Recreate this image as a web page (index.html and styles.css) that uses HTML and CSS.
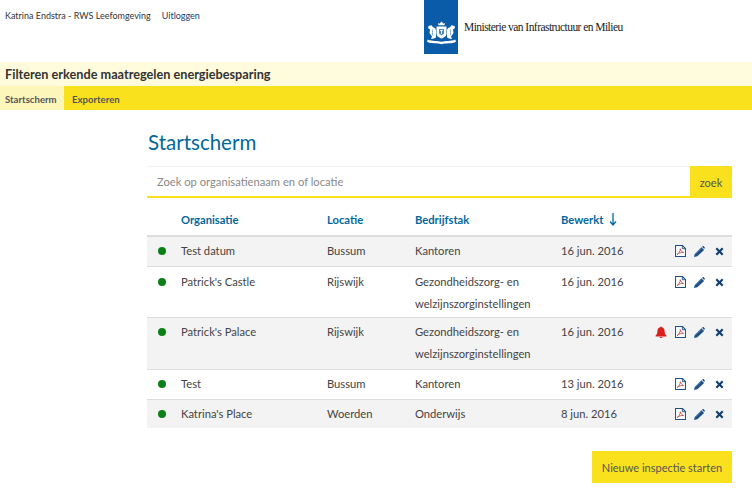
FILE: index.html
```html
<!DOCTYPE html>
<html lang="nl">
<head>
<meta charset="utf-8">
<title>Startscherm</title>
<link rel="stylesheet" href="styles.css">
</head>
<body>
<svg class="defs" width="0" height="0">
  <defs>
    <symbol id="pdf" viewBox="0 0 12 13"><path d="M.6.6h7.600l3.200 3.200v8.600H.6z" fill="#fff" stroke="#1b4f86" stroke-width="1.100"/><path d="M8 .8v3.200h3.200" fill="none" stroke="#1b4f86"/><path d="M2.200 10.400c2-1.200 3.600-3.800 3.600-6.400.6 2.400 1.600 3.400 3.600 4-2.600 0-5 .6-7.200 2.400z" fill="none" stroke="#b5493f" stroke-width=".9"/></symbol>
    <symbol id="pencil" viewBox="0 0 12 12"><path d="M0 12l.8-3.400L8 1.400l3 3-7.400 6.800z" fill="#1b4f86"/><path d="M8.800.8l.6-.5c.4-.3.9-.3 1.200 0l1 1c.3.4.3.9 0 1.200l-.6.700z" fill="#1b4f86"/><path d="M1.400 8.800l6.400-6.200" stroke="#7fa3c7" stroke-width=".8"/></symbol>
    <symbol id="cross" viewBox="0 0 10 10"><path d="M2.300.6L5 3.300 7.700.6l1.700 1.700L6.700 5l2.700 2.700-1.700 1.700L5 6.700 2.300 9.400.6 7.700 3.300 5 .6 2.300z" fill="#123f73"/></symbol>
    <symbol id="bell" viewBox="0 0 12 12"><path d="M6 .4c.5 0 .8.3.8.8 2 .4 2.800 2 2.800 4 0 2 .6 3.200 1.800 4.400v.8H.6v-.8C1.800 8.400 2.400 7.200 2.400 5.200c0-2 .8-3.600 2.800-4 0-.5.3-.8.8-.8z" fill="#d9201c"/><path d="M4.600 11h2.800c0 .6-.6 1-1.400 1s-1.400-.4-1.400-1z" fill="#d9201c"/></symbol>
  </defs>
</svg>
<header class="top">
  <div class="user"><span>Katrina Endstra - RWS Leefomgeving</span><a class="logout" href="#">Uitloggen</a></div>
  <div class="brand">
    <div class="logo">
      <svg class="crest" viewBox="0.500 0 28 24" width="29" height="24">
        <g fill="#fff">
          <path d="M11.500 4.200l-.5-2.200 1.500.8L14.500.5l2 2.300 1.500-.8-.5 2.200z"/>
          <path d="M9.500 5.500h10v7.500c0 2.400-2.700 3.600-5 4.600-2.300-1-5-2.200-5-4.600z"/>
          <path d="M1.500 5l3-.7 1.500 2 2 .7L9 9v7.500l-2 1-3 .5 1-2.500-1.500-2-1-1.500.5-3.500-2-1.500z"/>
          <path d="M27.500 5l-3-.7-1.500 2-2 .7-1 2v7.500l2 1 3 .5-1-2.500 1.500-2 1-1.500-.5-3.500 2-1.500z"/>
          <path d="M.8 18.500c4.200 2 9.700 1.200 13.700 2.200 4-1 9.500-.2 13.700-2.200l.8 2.300c-4 2.200-10.300 1.200-14.500 2.400-4.200-1.200-10.500-.2-14.500-2.400z"/>
        </g>
        <path d="M12 8h5v4.500l-2.500 2-2.500-2z" fill="#4d86bd"/>
        <path d="M13 9.500h3M14.500 9v4" stroke="#fff" stroke-width=".8"/>
        <path d="M5.500 8.500v6M23.500 8.500v6" stroke="#6f9fcc" stroke-width=".8"/>
      </svg>
    </div>
    <span class="ministry">Ministerie van Infrastructuur en Milieu</span>
  </div>
</header>
<div class="appbar">Filteren erkende maatregelen energiebesparing</div>
<nav class="tabs"><a class="tab active" href="#">Startscherm</a><a class="tab" href="#">Exporteren</a></nav>
<main class="content">
  <h1 class="title">Startscherm</h1>
  <form class="search">
    <div class="search-field">Zoek op organisatienaam en of locatie</div>
    <button class="search-btn" type="button">zoek</button>
  </form>
  <table class="list">
    <thead>
      <tr>
        <th class="c-dot"></th><th class="c-org">Organisatie</th><th class="c-loc">Locatie</th><th class="c-bed">Bedrijfstak</th>
        <th class="c-date">Bewerkt <svg class="sort" viewBox="0 0 8 13" width="8" height="13"><path d="M4 0v11.500M1 8.500l3 3.500 3-3.500" fill="none" stroke="#01689b" stroke-width="1.300"/></svg></th>
        <th class="c-act"></th>
      </tr>
    </thead>
    <tbody>
      <tr class="alt">
        <td><i class="dot"></i></td><td>Test datum</td><td>Bussum</td><td>Kantoren</td><td>16 jun. 2016</td>
        <td><div class="actions"><svg class="i-pdf"><use href="#pdf"/></svg><svg class="i-pen"><use href="#pencil"/></svg><svg class="i-x"><use href="#cross"/></svg></div></td>
      </tr>
      <tr class="offset">
        <td><i class="dot"></i></td><td>Patrick's Castle</td><td>Rijswijk</td><td>Gezondheidszorg- en welzijnszorginstellingen</td><td>16 jun. 2016</td>
        <td><div class="actions"><svg class="i-pdf"><use href="#pdf"/></svg><svg class="i-pen"><use href="#pencil"/></svg><svg class="i-x"><use href="#cross"/></svg></div></td>
      </tr>
      <tr class="alt">
        <td><i class="dot"></i></td><td>Patrick's Palace</td><td>Rijswijk</td><td>Gezondheidszorg- en welzijnszorginstellingen</td><td>16 jun. 2016</td>
        <td><div class="actions"><svg class="i-bell"><use href="#bell"/></svg><svg class="i-pdf"><use href="#pdf"/></svg><svg class="i-pen"><use href="#pencil"/></svg><svg class="i-x"><use href="#cross"/></svg></div></td>
      </tr>
      <tr>
        <td><i class="dot"></i></td><td>Test</td><td>Bussum</td><td>Kantoren</td><td>13 jun. 2016</td>
        <td><div class="actions"><svg class="i-pdf"><use href="#pdf"/></svg><svg class="i-pen"><use href="#pencil"/></svg><svg class="i-x"><use href="#cross"/></svg></div></td>
      </tr>
      <tr class="alt">
        <td><i class="dot"></i></td><td>Katrina's Place</td><td>Woerden</td><td>Onderwijs</td><td>8 jun. 2016</td>
        <td><div class="actions"><svg class="i-pdf"><use href="#pdf"/></svg><svg class="i-pen"><use href="#pencil"/></svg><svg class="i-x"><use href="#cross"/></svg></div></td>
      </tr>
    </tbody>
  </table>
  <div class="footer-actions"><button class="primary" type="button">Nieuwe inspectie starten</button></div>
</main>
</body>
</html>
```
FILE: styles.css
```css
* { box-sizing: border-box; }
html, body { margin: 0; padding: 0; }
body { font-family: Lato, "Noto Sans", sans-serif; color: #333; background: #fff; overflow: hidden; }
.defs { position: absolute; }
a { text-decoration: none; }

.top { display: flex; height: 62px; }
.user { width: 424px; padding: 10px 0 0 5px; font-size: 9px; line-height: 12px; color: #333; }
.logout { margin-left: 11px; color: #154273; }
.brand { display: flex; align-items: flex-start; }
.logo { width: 34px; height: 54px; background: #0a5ca8; display: flex; justify-content: center; padding-top: 21px; }
.crest { display: block; }
.ministry { margin-left: 6px; margin-top: 19px; font-family: "Liberation Serif", serif; font-size: 11.500px; letter-spacing: -.55px; line-height: 16px; color: #222; }

.appbar { height: 24px; background: #fffbdc; padding-left: 5px; font-size: 12.700px; font-weight: 700; line-height: 24px; color: #333; }
.tabs { display: flex; height: 24px; background: #f9e11e; }
.tab { padding: 0 7px 0 5px; font-size: 9.600px; font-weight: 700; line-height: 27px; color: #555; }
.tab.active { background: #fdf6bb; width: 64px; }
.tab + .tab { padding-left: 8px; }

.content { width: 585px; margin-left: 147px; }
.title { margin: 0; height: 56px; padding-top: 19px; padding-left: 1px; font-size: 20.500px; font-weight: 400; line-height: 27px; color: #01689b; }
.search { display: flex; height: 32px; }
.search-field { flex: 1; border-top: 1px solid #f3f3f3; border-bottom: 2px solid #f9e11e; padding-left: 10px; font-size: 11.200px; line-height: 29px; color: #8a8a8a; }
.search-btn { width: 42px; border: 0; padding: 0; background: #f9e11e; font: 11px/1 Lato, sans-serif; color: #555; }

.list { width: 585px; border-collapse: collapse; table-layout: fixed; font-size: 11.200px; }
.c-dot { width: 34px; }
.c-org { width: 146px; }
.c-loc { width: 88px; }
.c-bed { width: 146px; }
.c-date { width: 90px; }
.list th { height: 38px; padding: 6px 0 0; text-align: left; font-weight: 700; color: #01689b; border-bottom: 2px solid #ddd; }
.sort { margin-left: 3px; vertical-align: -2px; }
.list td { padding: 3px 0 4px; line-height: 22px; vertical-align: top; border-bottom: 1px solid #ddd; color: #444; }
.list .offset td { padding: 4px 0 2px; }
.list tr:last-child td { border-bottom: 0; padding-bottom: 3px; }
.alt { background: #f3f3f3; }
.dot { display: block; width: 8px; height: 8px; margin: 7px 0 0 11px; border-radius: 50%; background: #0a8016; }
.actions { display: flex; justify-content: flex-end; align-items: center; height: 22px; padding-right: 8px; }
.actions svg { flex: none; }
.i-pdf { width: 11px; height: 12px; margin-left: 8px; }
.i-pen { width: 11px; height: 11px; margin-left: 8px; }
.i-x { width: 9px; height: 9px; margin-left: 10px; }
.i-bell { width: 12px; height: 12px; }

.footer-actions { display: flex; justify-content: flex-end; padding-top: 23px; }
.primary { width: 140px; height: 32px; border: 0; padding: 0; background: #f9e11e; font: 11px/1 Lato, sans-serif; color: #555; }
```
